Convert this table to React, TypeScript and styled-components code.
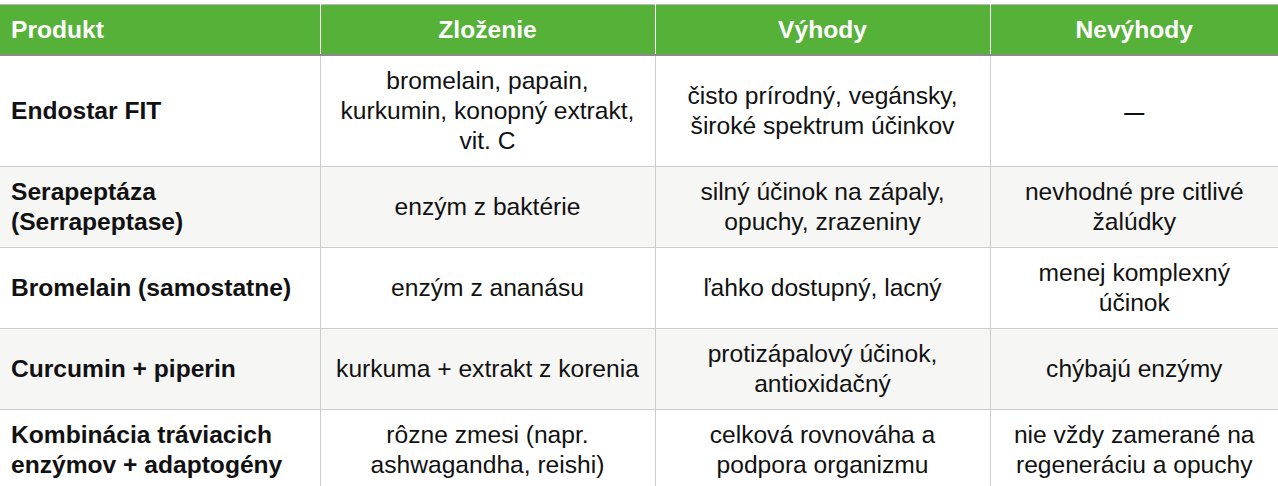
import React from "react";
import styled, { createGlobalStyle } from "styled-components";

const GlobalStyle = createGlobalStyle`
  html, body {
    margin: 0;
    padding: 0;
    background: #ffffff;
  }
  body {
    font-family: "Liberation Sans", Arial, Helvetica, sans-serif;
    color: #111111;
    overflow: hidden;
  }
`;

const Page = styled.div`
  padding-top: 4px;
  width: 1278px;
`;

const Table = styled.table`
  width: 1278px;
  border-collapse: collapse;
  table-layout: fixed;
  border-top: 1px solid #b9b9b9;
  font-size: 24.6px;
  line-height: 30px;
`;

const HeadCell = styled.th<{ $left?: boolean }>`
  background: #55b137;
  color: #ffffff;
  font-weight: 700;
  height: 49px;
  padding: 0 11px;
  text-align: ${(p) => (p.$left ? "left" : "center")};
  border-bottom: 2px solid #8a8a8a;
  border-left: 1px solid #ffffff;
  &:first-child {
    border-left: none;
  }
`;

const Row = styled.tr<{ $shade: boolean }>`
  background: ${(p) => (p.$shade ? "#f6f6f5" : "#ffffff")};
`;

const Cell = styled.td<{ $left?: boolean }>`
  padding: 10px 11px 10px;
  vertical-align: middle;
  text-align: ${(p) => (p.$left ? "left" : "center")};
  font-weight: ${(p) => (p.$left ? 700 : 400)};
  border-bottom: 1px solid #cdcdcd;
  border-left: 1px solid #cdcdcd;
  &:first-child {
    border-left: none;
  }
`;

const Dash = styled.span`
  font-size: 20px;
  font-weight: 700;
`;

const columns = [
  { title: "Produkt", width: 320 },
  { title: "Zloženie", width: 335 },
  { title: "Výhody", width: 335 },
  { title: "Nevýhody", width: 288 },
];

const rows: string[][][] = [
  [
    ["Endostar FIT"],
    ["bromelain, papain,", "kurkumin, konopný extrakt,", "vit. C"],
    ["čisto prírodný, vegánsky,", "široké spektrum účinkov"],
    ["—"],
  ],
  [
    ["Serapeptáza", "(Serrapeptase)"],
    ["enzým z baktérie"],
    ["silný účinok na zápaly,", "opuchy, zrazeniny"],
    ["nevhodné pre citlivé", "žalúdky"],
  ],
  [
    ["Bromelain (samostatne)"],
    ["enzým z ananásu"],
    ["ľahko dostupný, lacný"],
    ["menej komplexný", "účinok"],
  ],
  [
    ["Curcumin + piperin"],
    ["kurkuma + extrakt z korenia"],
    ["protizápalový účinok,", "antioxidačný"],
    ["chýbajú enzýmy"],
  ],
  [
    ["Kombinácia tráviacich", "enzýmov + adaptogény"],
    ["rôzne zmesi (napr.", "ashwagandha, reishi)"],
    ["celková rovnováha a", "podpora organizmu"],
    ["nie vždy zamerané na", "regeneráciu a opuchy"],
  ],
];

const Lines: React.FC<{ lines: string[] }> = ({ lines }) => (
  <>
    {lines.map((l, i) => (
      <React.Fragment key={i}>
        {i > 0 && <br />}
        {l === "—" ? <Dash>{l}</Dash> : l}
      </React.Fragment>
    ))}
  </>
);

const App: React.FC = () => {
  return (
    <>
      <GlobalStyle />
      <Page>
        <Table>
          <colgroup>
            {columns.map((c) => (
              <col key={c.title} style={{ width: c.width }} />
            ))}
          </colgroup>
          <thead>
            <tr>
              {columns.map((c, i) => (
                <HeadCell key={c.title} $left={i === 0}>
                  {c.title}
                </HeadCell>
              ))}
            </tr>
          </thead>
          <tbody>
            {rows.map((r, i) => (
              <Row key={i} $shade={i % 2 === 1}>
                {r.map((cell, j) => (
                  <Cell key={j} $left={j === 0}>
                    <Lines lines={cell} />
                  </Cell>
                ))}
              </Row>
            ))}
          </tbody>
        </Table>
      </Page>
    </>
  );
};

export default App;
